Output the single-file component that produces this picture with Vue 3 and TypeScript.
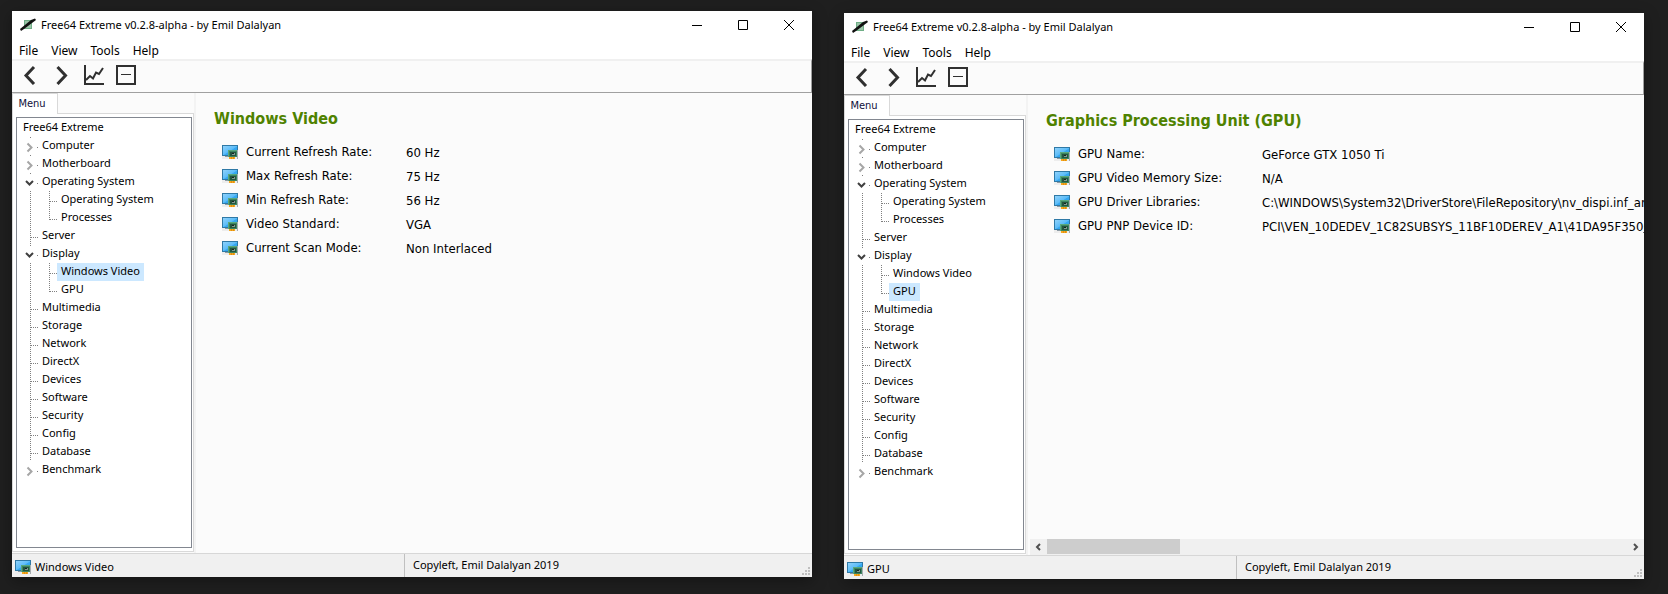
<script setup lang="ts">
interface TreeItem {
  label: string
  level: 0 | 1 | 2
  state?: 'open' | 'closed'
  last?: boolean
}
interface Detail {
  label: string
  value: string
  marked?: string
  rest?: string
}
interface AppWindow {
  id: string
  heading: string
  selected: string
  scrollable: boolean
  details: Detail[]
}

const menus: string[] = ['File', 'View', 'Tools', 'Help']

const tree: TreeItem[] = [
  { label: 'Free64 Extreme', level: 0 },
  { label: 'Computer', level: 1, state: 'closed' },
  { label: 'Motherboard', level: 1, state: 'closed' },
  { label: 'Operating System', level: 1, state: 'open' },
  { label: 'Operating System', level: 2 },
  { label: 'Processes', level: 2, last: true },
  { label: 'Server', level: 1 },
  { label: 'Display', level: 1, state: 'open' },
  { label: 'Windows Video', level: 2 },
  { label: 'GPU', level: 2, last: true },
  { label: 'Multimedia', level: 1 },
  { label: 'Storage', level: 1 },
  { label: 'Network', level: 1 },
  { label: 'DirectX', level: 1 },
  { label: 'Devices', level: 1 },
  { label: 'Software', level: 1 },
  { label: 'Security', level: 1 },
  { label: 'Config', level: 1 },
  { label: 'Database', level: 1 },
  { label: 'Benchmark', level: 1, state: 'closed' },
]

const windows: AppWindow[] = [
  {
    id: 'video',
    heading: 'Windows Video',
    selected: 'Windows Video',
    scrollable: false,
    details: [
      { label: 'Current Refresh Rate:', value: '60 Hz' },
      { label: 'Max Refresh Rate:', value: '75 Hz' },
      { label: 'Min Refresh Rate:', value: '56 Hz' },
      { label: 'Video Standard:', value: 'VGA' },
      { label: 'Current Scan Mode:', value: 'Non Interlaced' },
    ],
  },
  {
    id: 'gpu',
    heading: 'Graphics Processing Unit (GPU)',
    selected: 'GPU',
    scrollable: true,
    details: [
      { label: 'GPU Name:', value: 'GeForce GTX 1050 Ti' },
      { label: 'GPU Video Memory Size:', value: 'N/A' },
      { label: 'GPU Driver Libraries:', value: 'C:\\WINDOWS\\System32\\DriverStore\\FileRepository\\nv_dispi.inf_amd64' },
      { label: 'GPU PNP Device ID:', value: 'PCI\\VEN_10DEDEV_1C82SUBSYS_11BF10DEREV_A1\\41DA95F350', marked: '0', rest: '008' },
    ],
  },
]
</script>

<template>
  <svg class="defs" aria-hidden="true">
    <defs>
      <linearGradient id="screen-fill" x1="0" y1="0" x2="1" y2="1">
        <stop offset="0" stop-color="#8fd2fb" />
        <stop offset="0.5" stop-color="#5cbcf8" />
        <stop offset="0.55" stop-color="#35a8f2" />
        <stop offset="1" stop-color="#2f9fe8" />
      </linearGradient>
      <symbol id="video-card" viewBox="0 0 16 14">
        <path d="M0 11h16v3H0z" fill="#ededed" />
        <path d="M0 0h16v11H0z" fill="#2f79a6" />
        <path d="M1 1h14v9H1z" fill="url(#screen-fill)" />
        <path d="M3 11h4v1H3z" fill="#8c9aa3" />
        <path d="M15 5h1v9h-1z" fill="#a7adb0" />
        <path d="M6 5h9v7H6z" fill="#5aa87c" />
        <path d="M7 6h8v6H7z" fill="#3c8560" />
        <path d="M8 7h6v4H8z" fill="#24553f" />
        <path d="M10 8h3v2h-3z" fill="#7f9c90" />
        <path d="M10 8h2v1h-2z" fill="#15251f" />
        <path d="M7 12h6v2H7z" fill="#f7a81c" />
        <path d="M9 12h1v2H9zM11 12h1v2h-1z" fill="#e08f12" />
      </symbol>
    </defs>
  </svg>

  <main class="desktop">
    <section v-for="win in windows" :key="win.id" class="window" :class="win.id">
      <header class="titlebar">
        <svg class="app-icon" width="16" height="16" viewBox="0 0 16 16" aria-hidden="true">
          <rect x="4.500" y="3.500" width="7" height="8" fill="#9cc5a9" stroke="#6fae86" />
          <path d="M0 12L11 3L15 1.500L16 3L4 12L1 14Z" fill="#111" />
        </svg>
        <h1 class="title">Free64 Extreme v0.2.8-alpha - by Emil Dalalyan</h1>
        <div class="controls">
          <button type="button" aria-label="Minimize">
            <svg width="12" height="12" viewBox="0 0 12 12"><path d="M1 6.500H11" /></svg>
          </button>
          <button type="button" aria-label="Maximize">
            <svg width="12" height="12" viewBox="0 0 12 12"><path d="M1.500 1.500h9v9h-9z" /></svg>
          </button>
          <button type="button" aria-label="Close">
            <svg width="12" height="12" viewBox="0 0 12 12"><path d="M1 1L11 11M11 1L1 11" /></svg>
          </button>
        </div>
      </header>

      <nav class="menubar">
        <button v-for="menu in menus" :key="menu" type="button">{{ menu }}</button>
      </nav>

      <div class="toolbar">
        <button type="button" aria-label="Back">
          <svg width="20" height="20" viewBox="0 0 20 20"><path d="M14 2L6 10.500L14 19" stroke-width="3" /></svg>
        </button>
        <button type="button" aria-label="Forward">
          <svg width="20" height="20" viewBox="0 0 20 20"><path d="M5.500 2L13.500 10.500L5.500 19" stroke-width="3" /></svg>
        </button>
        <button type="button" aria-label="Benchmark chart">
          <svg width="20" height="20" viewBox="0 0 20 20">
            <path d="M1 0V19H20" stroke-width="2" />
            <path d="M2 15L6 11L9 13.500L12 7.500L15 9L19 3" stroke-width="2" />
          </svg>
        </button>
        <button type="button" aria-label="Collapse">
          <svg width="20" height="20" viewBox="0 0 20 20">
            <path d="M1 1h18v18H1z" stroke-width="2" />
            <path d="M5 9.500H15" stroke-width="1" />
          </svg>
        </button>
      </div>

      <div class="body">
        <aside class="sidebar">
          <div class="tabs">
            <button type="button" class="tab">Menu</button>
            <span class="tab-rest"></span>
          </div>
          <div class="tab-page">
            <ul class="tree">
              <li v-for="(item, i) in tree" :key="i" class="row" :class="'level-' + item.level">
                <svg v-if="item.level === 1" class="guide" width="21" height="18" viewBox="0 0 21 18" aria-hidden="true">
                  <template v-if="item.state">
                    <path v-if="i < tree.length - 1" d="M13.500 0V1" />
                    <path d="M20 10.500H21" />
                    <path v-if="item.state === 'closed'" class="closed" d="M10.500 6.500L14.500 10.500L10.500 14.500" />
                    <path v-else class="open" d="M9 8L12.500 11.500L16 8" />
                  </template>
                  <template v-else>
                    <path class="dots" d="M13.500 0V18" />
                    <path class="dots" d="M14 10.500H21" />
                  </template>
                </svg>
                <svg v-else-if="item.level === 2" class="guide" width="40" height="18" viewBox="0 0 40 18" aria-hidden="true">
                  <path class="dots" d="M13.500 0V18" />
                  <path class="dots" :d="item.last ? 'M32.500 0V11' : 'M32.500 0V18'" />
                  <path class="dots" d="M33 10.500H40" />
                </svg>
                <button
                  type="button"
                  class="node"
                  :class="{ selected: item.level === 2 && item.label === win.selected }"
                >{{ item.label }}</button>
              </li>
            </ul>
          </div>
        </aside>

        <div class="content">
          <div class="page">
            <h2>{{ win.heading }}</h2>
            <dl class="details">
              <div v-for="detail in win.details" :key="detail.label" class="detail">
                <dt>
                  <svg width="16" height="14" aria-hidden="true"><use href="#video-card" /></svg>
                  <span>{{ detail.label }}</span>
                </dt>
                <dd>{{ detail.value }}<u v-if="detail.marked">{{ detail.marked }}</u>{{ detail.rest }}</dd>
              </div>
            </dl>
          </div>
          <div v-if="win.scrollable" class="scrollbar">
            <button type="button" aria-label="Scroll left">
              <svg width="8" height="8" viewBox="0 0 8 8"><path d="M5 1L2 4L5 7" /></svg>
            </button>
            <div class="track"><div class="thumb"></div></div>
            <button type="button" aria-label="Scroll right">
              <svg width="8" height="8" viewBox="0 0 8 8"><path d="M2 1L5 4L2 7" /></svg>
            </button>
          </div>
        </div>
      </div>

      <footer class="status">
        <div class="status-item">
          <svg width="16" height="14" aria-hidden="true"><use href="#video-card" /></svg>
          <span>{{ win.selected }}</span>
        </div>
        <div class="copyright">Copyleft, Emil Dalalyan 2019</div>
        <svg class="grip" width="8" height="8" viewBox="0 0 8 8" aria-hidden="true">
          <path d="M6 0h2v2H6zM3 3h2v2H3zM6 3h2v2H6zM0 6h2v2H0zM3 6h2v2H3zM6 6h2v2H6z" fill="#bfbfbf" />
        </svg>
      </footer>
    </section>
  </main>
</template>

<style>
body {
  margin: 0;
  background: #1f1f1f;
}
</style>

<style scoped>
* {
  box-sizing: border-box;
}
.defs {
  position: absolute;
  width: 0;
  height: 0;
}
button {
  margin: 0;
  padding: 0;
  border: 0;
  background: none;
  color: inherit;
  font: inherit;
}
svg {
  display: block;
  flex: none;
}
.desktop {
  display: flex;
  gap: 32px;
  min-height: 100vh;
  padding: 11px 24px 15px 12px;
  font: 11px/18px "Noto Sans", "Open Sans", sans-serif;
  color: #000;
}
.window {
  display: flex;
  flex: 1 1 0;
  flex-direction: column;
  min-width: 0;
  background: #fff;
  box-shadow: 0 4px 14px rgba(0, 0, 0, 0.35);
}
.window.video {
  margin-bottom: 2px;
}
.window.gpu {
  margin-top: 2px;
}
.titlebar {
  display: flex;
  align-items: center;
  height: 28px;
  padding-left: 8px;
}
.title {
  margin: 0 0 0 5px;
  font-size: 11px;
  font-weight: 400;
  white-space: nowrap;
}
.controls {
  display: flex;
  align-self: stretch;
  margin-left: auto;
}
.controls button {
  display: grid;
  place-items: center;
  width: 46px;
}
.controls path {
  fill: none;
  stroke: #000;
}
.menubar {
  display: flex;
  gap: 1px;
  height: 20px;
  padding: 3px 0 0 1px;
  font-size: 12px;
  line-height: 17px;
}
.menubar button {
  padding: 0 6px;
}
.toolbar {
  display: flex;
  align-items: center;
  height: 34px;
  padding: 0 2px 4px;
  border-top: 2px solid #f0f0f0;
  border-right: 1px solid #a0a0a0;
  border-bottom: 1px solid #a0a0a0;
  background: #fbfbfb;
}
.toolbar button {
  display: grid;
  place-items: center;
  width: 32px;
}
.toolbar path {
  fill: none;
  stroke: #303030;
}
.body {
  display: flex;
  flex: 1;
  min-height: 0;
  background: #fbfbfb;
}
.sidebar {
  display: flex;
  flex: none;
  flex-direction: column;
  width: 184px;
  padding-bottom: 1px;
  border-right: 2px solid #f3f3f3;
}
.tabs {
  display: flex;
  height: 21px;
}
.tab {
  width: 46px;
  padding-right: 6px;
  border: 1px solid #d9d9d9;
  border-bottom: 0;
  background: #fff;
  color: #10103a;
  font-family: "DejaVu Sans Condensed", "DejaVu Sans", sans-serif;
}
.tab-rest {
  flex: 1;
  border-bottom: 1px solid #d9d9d9;
}
.tab-page {
  display: flex;
  flex: 1;
  padding: 3px 1px 3px 3px;
  border: 1px solid #d9d9d9;
  border-top: 0;
  background: #fff;
}
.tree {
  flex: 1;
  margin: 0;
  padding: 1px 0;
  border: 1px solid #828790;
  list-style: none;
}
.row {
  display: flex;
  height: 18px;
  line-height: 16px;
}
.level-0 {
  padding-left: 2px;
}
.guide path {
  fill: none;
  stroke: #808080;
}
.guide .dots {
  stroke-dasharray: 1 1;
}
.guide .closed {
  stroke: #a6a6a6;
  stroke-width: 2;
}
.guide .open {
  stroke: #404040;
  stroke-width: 2;
}
.node {
  padding: 0 4px 2px;
  white-space: nowrap;
}
.selected {
  background: #cce8ff;
}
.content {
  display: flex;
  flex: 1;
  flex-direction: column;
  min-width: 0;
  font: 13px/24px "DejaVu Sans Condensed", "DejaVu Sans", sans-serif;
}
.page {
  flex: 1;
  padding: 16px 0 0 18px;
  overflow: hidden;
}
h2 {
  margin: 0;
  color: #4f8200;
  font-size: 16px;
  font-weight: 700;
  line-height: 20px;
  white-space: nowrap;
}
.details {
  margin: 11px 0 0;
  padding-left: 8px;
}
.detail {
  display: flex;
  height: 24px;
  white-space: nowrap;
}
dt {
  display: flex;
  flex: none;
  gap: 8px;
  align-items: center;
  width: 184px;
}
.gpu dt {
  width: 208px;
}
dd {
  margin: 0;
  padding-top: 1px;
}
.scrollbar {
  display: flex;
  height: 16px;
  margin-left: 2px;
  background: #f0f0f0;
}
.scrollbar button {
  display: grid;
  place-items: center;
  width: 17px;
}
.scrollbar path {
  fill: none;
  stroke: #505050;
  stroke-width: 2;
}
.track {
  flex: 1;
  padding-bottom: 1px;
}
.thumb {
  width: 23%;
  height: 100%;
  background: #cdcdcd;
}
.status {
  display: flex;
  align-items: stretch;
  height: 24px;
  border-top: 1px solid #d7d7d7;
  background: #f0f0f0;
}
.status-item {
  display: flex;
  flex: none;
  gap: 4px;
  align-items: center;
  width: 49%;
  padding-top: 2px;
  padding-left: 3px;
}
.copyright {
  flex: 1;
  padding: 2px 0 0 8px;
  border-left: 1px solid #c0c0c0;
}
.grip {
  align-self: flex-end;
  margin: 0 2px 2px 0;
}
</style>
